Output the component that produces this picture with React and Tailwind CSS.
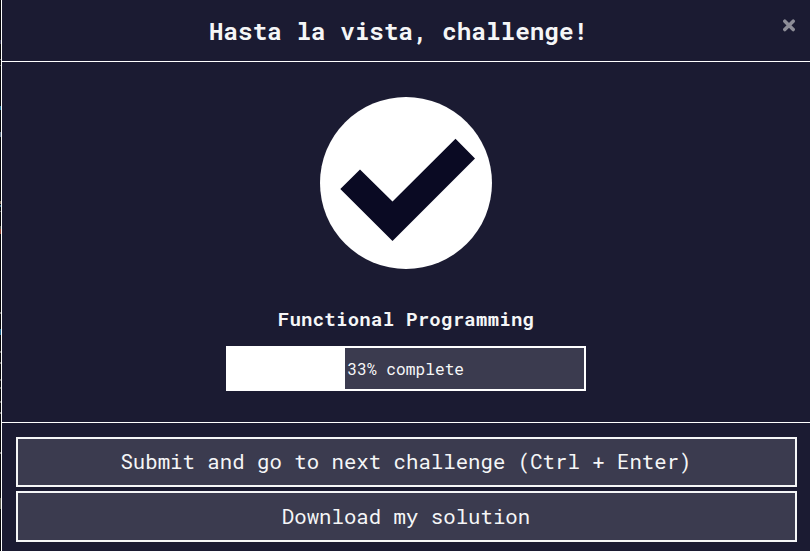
import React from "react";

const edgeMarks = [
  { top: 40, height: 4, color: "#30304c" },
  { top: 59, height: 1, color: "#606068" },
  { top: 65, height: 1, color: "#505058" },
  { top: 106, height: 4, color: "#1f6f94" },
  { top: 132, height: 5, color: "#53677b" },
  { top: 201, height: 3, color: "#806f60" },
  { top: 205, height: 2, color: "#2f5f7a" },
  { top: 211, height: 1, color: "#5b5b5b" },
  { top: 226, height: 3, color: "#4a4a40" },
  { top: 229, height: 5, color: "#8a3a2a" },
  { top: 312, height: 2, color: "#6b6b6b" },
  { top: 329, height: 6, color: "#17608a" },
  { top: 351, height: 2, color: "#6b6b6b" },
  { top: 362, height: 2, color: "#6b6b6b" },
  { top: 379, height: 2, color: "#5b5b5b" },
  { top: 387, height: 2, color: "#5b5b5b" },
  { top: 401, height: 2, color: "#6b6b6b" },
  { top: 412, height: 2, color: "#777777" },
  { top: 452, height: 2, color: "#777777" },
  { top: 498, height: 11, color: "#55554a" },
];

function ActionButton({ className, children }) {
  return (
    <button
      className={`block w-full border-2 border-[#f5f6f7] bg-[#3b3b4f] pr-px text-center text-[20.7px] leading-[30px] font-[430] whitespace-nowrap ${className}`}
    >
      {children}
    </button>
  );
}

export default function App() {
  return (
    <div className="relative flex h-[551px] w-[810px] overflow-hidden bg-[#050509] pl-px font-['Roboto_Mono','DejaVu_Sans_Mono',monospace] text-[#f5f6f7]">
      {edgeMarks.map((m) => (
        <span
          key={m.top}
          className="absolute left-0 w-px"
          style={{ top: m.top, height: m.height, background: m.color }}
        />
      ))}
      <div className="flex flex-1 flex-col border-l border-white bg-[#1b1b32]">
        <header className="relative flex h-[62px] shrink-0 items-center justify-center border-b border-white pt-px pr-[15px]">
          <h1 className="text-[24.3px] leading-8 font-bold whitespace-pre">
            Hasta la vista, challenge!
          </h1>
          <button aria-label="Close" className="absolute top-[18px] right-[14px]">
            <svg width="14" height="14" viewBox="0 0 14 14" className="block">
              <path
                d="M2.8 3.2 11.2 11.6M11.2 3.2 2.8 11.6"
                stroke="#8d8d97"
                strokeWidth="3.5"
                strokeLinecap="round"
              />
            </svg>
          </button>
        </header>

        <main className="flex h-[361px] shrink-0 flex-col items-center border-b border-white pt-[35px]">
          <svg width="172" height="172" viewBox="0 0 172 172" className="block shrink-0">
            <circle cx="86" cy="86" r="86" fill="#fff" />
            <path d="M20.3 92 40 72.4 72.5 104.5 135.5 41.8 155 61.5 72.5 144Z" fill="#0a0a23" />
          </svg>
          <h2 className="mt-9 text-[19px] leading-[28px] font-bold tracking-[0.26px] whitespace-nowrap">
            Functional Programming
          </h2>
          <div className="mt-[13px] flex h-[45px] w-[360px] shrink-0 items-center border-2 border-white bg-[#3b3b4f]">
            <div className="h-full w-[117px] shrink-0 bg-white" />
            <span className="pl-[2.5px] text-[16.2px] leading-6 font-[430] whitespace-nowrap">
              33% complete
            </span>
          </div>
        </main>

        <footer className="flex flex-col gap-1 pt-[14px] pr-[13px] pl-[14px]">
          <ActionButton className="h-[50px] pb-[3px]">
            Submit and go to next challenge (Ctrl + Enter)
          </ActionButton>
          <ActionButton className="h-[51px] pb-[2px]">Download my solution</ActionButton>
        </footer>
      </div>
    </div>
  );
}
